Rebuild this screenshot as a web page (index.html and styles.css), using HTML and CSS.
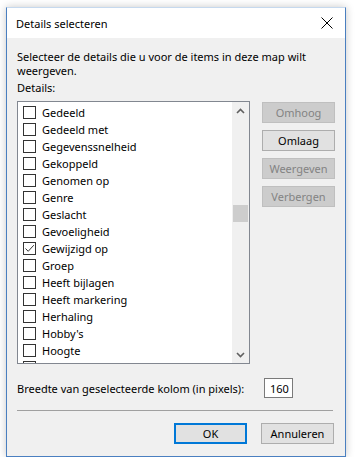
FILE: index.html
```html
<!DOCTYPE html>
<html lang="nl">
<head>
  <meta charset="UTF-8">
  <title>Details selecteren</title>
  <link rel="stylesheet" href="styles.css">
</head>
<body>
  <div class="window">
    <div class="titlebar">
      <span class="title">Details selecteren</span>
      <svg class="close" width="12" height="12" viewBox="0 0 12 12">
        <path d="M0.5 0.5 L11.5 11.5 M11.5 0.5 L0.5 11.5" stroke="#000" stroke-width="1" fill="none"/>
      </svg>
    </div>
    <div class="content">
      <p class="intro">Selecteer de details die u voor de items in deze map wilt<br>weergeven.</p>
      <p class="label">Details:</p>
      <div class="picker">
        <div class="list">
          <div class="items">
            <div class="item"><span class="box"></span>Gedeeld</div>
            <div class="item"><span class="box"></span>Gedeeld met</div>
            <div class="item"><span class="box"></span>Gegevenssnelheid</div>
            <div class="item"><span class="box"></span>Gekoppeld</div>
            <div class="item"><span class="box"></span>Genomen op</div>
            <div class="item"><span class="box"></span>Genre</div>
            <div class="item"><span class="box"></span>Geslacht</div>
            <div class="item"><span class="box"></span>Gevoeligheid</div>
            <div class="item"><span class="box checked"><svg width="11" height="11" viewBox="0 0 11 11"><path d="M1.5 5.5 L4.2 8.3 L9.8 2.2" stroke="#333" stroke-width="1" fill="none"/></svg></span>Gewijzigd op</div>
            <div class="item"><span class="box"></span>Groep</div>
            <div class="item"><span class="box"></span>Heeft bijlagen</div>
            <div class="item"><span class="box"></span>Heeft markering</div>
            <div class="item"><span class="box"></span>Herhaling</div>
            <div class="item"><span class="box"></span>Hobby's</div>
            <div class="item"><span class="box"></span>Hoogte</div>
            <div class="item"><span class="box"></span></div>
          </div>
          <div class="scrollbar">
            <div class="arrow">
              <svg width="9" height="6" viewBox="0 0 9 6"><path d="M1 5 L4.5 1.5 L8 5" stroke="#606060" stroke-width="1.6" fill="none"/></svg>
            </div>
            <div class="track"><div class="thumb"></div></div>
            <div class="arrow">
              <svg width="9" height="6" viewBox="0 0 9 6"><path d="M1 1 L4.5 4.5 L8 1" stroke="#606060" stroke-width="1.6" fill="none"/></svg>
            </div>
          </div>
        </div>
        <div class="side">
          <button class="btn" disabled>Omhoog</button>
          <button class="btn">Omlaag</button>
          <button class="btn" disabled>Weergeven</button>
          <button class="btn" disabled>Verbergen</button>
        </div>
      </div>
      <div class="width-row">
        <span class="width-label">Breedte van geselecteerde kolom (in pixels):</span>
        <input class="width-input" type="text" value="160">
      </div>
      <hr class="sep">
      <div class="footer">
        <button class="btn default">OK</button>
        <button class="btn">Annuleren</button>
      </div>
    </div>
  </div>
</body>
</html>
```

FILE: styles.css
```css
body { margin: 0; background: #fff; font-family: "Noto Sans", sans-serif; font-size: 11px; color: #000; }
p { margin: 0; }

.window { margin: 7px 0 0 6px; width: 338px; height: 448px; border: 1px solid #4a7fc0; border-top-color: #c6d9ee; background: #f0f0f0; box-shadow: 0 0 8px rgba(0,0,0,0.22); display: flex; flex-direction: column; }
.titlebar { height: 30px; background: #fff; display: flex; align-items: center; justify-content: space-between; padding: 0 12px 0 9px; }
.close { display: block; }

.content { padding: 12px 10px 0 10px; }
.intro { line-height: 14px; }
.label { line-height: 14px; margin-top: 3px; }

.picker { display: flex; margin-top: 6px; }
.list { width: 232px; height: 261px; border: 1px solid #828790; background: #fff; display: flex; overflow: hidden; }
.items { flex: 1; padding-top: 2px; overflow: hidden; }
.item { height: 17px; display: flex; align-items: center; padding-left: 5px; white-space: nowrap; }
.box { width: 11px; height: 11px; border: 1px solid #333; margin-right: 6px; background: #fff; display: flex; }
.scrollbar { width: 17px; background: #f0f0f0; display: flex; flex-direction: column; }
.arrow { height: 17px; display: flex; align-items: center; justify-content: center; }
.track { flex: 1; }
.thumb { margin-top: 86px; margin-left: 1px; width: 15px; height: 17px; background: #cdcdcd; }

.side { display: flex; flex-direction: column; gap: 7px; margin-left: 12px; margin-top: 1px; }
.btn { width: 73px; height: 21px; padding: 0; border: 1px solid #adadad; background: #e1e1e1; font-family: "Noto Sans", sans-serif; font-size: 11px; color: #000; }
.btn:disabled { background: #cccccc; border-color: #bfbfbf; color: #838383; }
.btn.default { border: 2px solid #0078d7; }

.width-row { display: flex; align-items: center; margin-top: 14px; }
.width-label { width: 247px; flex-shrink: 0; }
.width-input { box-sizing: border-box; width: 29px; height: 20px; padding: 0 0 0 5px; border: 1px solid #7a7a7a; background: #fff; font-family: "Noto Sans", sans-serif; font-size: 11px; }

.sep { border: 0; border-top: 1px solid #a0a0a0; margin: 12px 2px 0 0; }
.footer { display: flex; justify-content: flex-end; gap: 14px; margin-top: 12px; padding-right: 1px; }
```
